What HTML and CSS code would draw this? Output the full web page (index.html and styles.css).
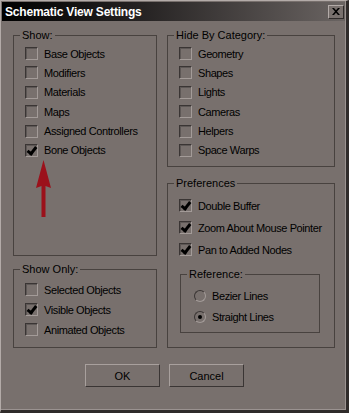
FILE: index.html
```html
<!DOCTYPE html>
<html lang="en">
<head>
  <meta charset="UTF-8" />
  <title>Schematic View Settings</title>
  <link rel="stylesheet" href="styles.css">
</head>
<body>
  <div class="window">
    <div class="titlebar">
      <span class="title">Schematic View Settings</span>
      <button class="close">
        <svg width="8" height="7" viewBox="0 0 8 7"><path d="M0 0h2l2 2.2L6 0h2L5 3.5 8 7H6L4 4.8 2 7H0l3-3.5z" fill="#000"/></svg>
      </button>
    </div>

    <div class="content">
      <div class="col col-left">
        <div class="group show">
          <span class="legend">Show:</span>
          <div class="list">
            <label class="row"><span class="cb"></span>Base Objects</label>
            <label class="row"><span class="cb"></span>Modifiers</label>
            <label class="row"><span class="cb"></span>Materials</label>
            <label class="row"><span class="cb"></span>Maps</label>
            <label class="row"><span class="cb"></span>Assigned Controllers</label>
            <label class="row"><span class="cb checked"></span>Bone Objects</label>
          </div>
          <svg class="arrow" width="16" height="57" viewBox="0 0 16 57">
            <polygon points="7.5,0 15,28 9.5,26 9.5,57 5.5,57 5.5,26 0,28" fill="#9b111b"/>
          </svg>
        </div>

        <div class="group show-only">
          <span class="legend">Show Only:</span>
          <div class="list">
            <label class="row"><span class="cb"></span>Selected Objects</label>
            <label class="row"><span class="cb checked"></span>Visible Objects</label>
            <label class="row"><span class="cb"></span>Animated Objects</label>
          </div>
        </div>
      </div>

      <div class="col col-right">
        <div class="group hide">
          <span class="legend">Hide By Category:</span>
          <div class="list">
            <label class="row"><span class="cb"></span>Geometry</label>
            <label class="row"><span class="cb"></span>Shapes</label>
            <label class="row"><span class="cb"></span>Lights</label>
            <label class="row"><span class="cb"></span>Cameras</label>
            <label class="row"><span class="cb"></span>Helpers</label>
            <label class="row"><span class="cb"></span>Space Warps</label>
          </div>
        </div>

        <div class="group prefs">
          <span class="legend">Preferences</span>
          <div class="list">
            <label class="row"><span class="cb checked"></span>Double Buffer</label>
            <label class="row"><span class="cb checked"></span>Zoom About Mouse Pointer</label>
            <label class="row"><span class="cb checked"></span>Pan to Added Nodes</label>
          </div>
          <div class="group reference">
            <span class="legend">Reference:</span>
            <div class="list">
              <label class="row"><span class="radio"></span>Bezier Lines</label>
              <label class="row"><span class="radio on"></span>Straight Lines</label>
            </div>
          </div>
        </div>
      </div>
    </div>

    <div class="buttons">
      <button class="btn">OK</button>
      <button class="btn">Cancel</button>
    </div>
  </div>
</body>
</html>
```

FILE: styles.css
```css
body {
  margin: 0;
  background: #78706d;
  font-family: 'Liberation Sans', Arial, sans-serif;
  font-size: 11px;
  color: #000;
}
.window {
  width: 349px;
  height: 413px;
  box-sizing: border-box;
  background: #78706d;
  border-top: 1px solid #b3aba8;
  border-left: 1px solid #b3aba8;
  border-right: 3px solid #2f2b2a;
  border-bottom: 3px solid #2f2b2a;
  box-shadow: inset -1px -1px 0 #9a9290;
}
.titlebar {
  margin: 1px 1px 0 1px;
  height: 19px;
  display: flex;
  align-items: center;
  justify-content: space-between;
  padding: 0 1px 0 3px;
  background: linear-gradient(to right, #000 0%, #252222 40%, #6a6462 100%);
}
.title {
  color: #fff;
  font-weight: bold;
  font-size: 12px;
  letter-spacing: -0.2px;
}
.close {
  width: 16px;
  height: 14px;
  padding: 0;
  margin: 0;
  display: flex;
  align-items: center;
  justify-content: center;
  background: #78706d;
  border: 1px solid;
  border-color: #b3aba8 #2f2b2a #2f2b2a #b3aba8;
}
.content {
  display: flex;
  gap: 10px;
  padding: 14px 0 0 12px;
}
.col {
  display: flex;
  flex-direction: column;
}
.col-left { width: 144px; gap: 13px; }
.col-right { width: 168px; gap: 16px; }
.group {
  position: relative;
  box-sizing: border-box;
  border: 1px solid #48423f;
}
.legend {
  position: absolute;
  top: -7px;
  left: 6px;
  padding: 0 2px;
  line-height: 13px;
  background: #78706d;
}
.list {
  display: flex;
  flex-direction: column;
}
.row {
  height: 13px;
  display: flex;
  align-items: center;
  gap: 6px;
  white-space: nowrap;
  letter-spacing: -0.4px;
}
.show { height: 221px; padding: 11px 0 0 11px; }
.show .list, .hide .list { gap: 6.4px; }
.arrow { display: block; margin: 3px 0 0 11px; }
.show-only { height: 79px; padding: 13px 0 0 11px; }
.show-only .list { gap: 7px; }
.hide { height: 132px; padding: 11px 0 0 11px; }
.prefs { height: 165px; padding: 15px 0 0 11px; }
.prefs > .list { gap: 9px; }
.reference {
  width: 140px;
  height: 59px;
  margin: 18px 0 0 1px;
  padding: 14px 0 0 13px;
}
.reference .list { gap: 8px; }
.cb {
  width: 13px;
  height: 13px;
  flex: none;
  box-sizing: border-box;
  border: 1px solid;
  border-color: #3a3534 #a39b98 #a39b98 #3a3534;
  box-shadow: inset 1px 1px 0 #5d5755;
  position: relative;
}
.cb.checked::after {
  content: "";
  position: absolute;
  left: 3px;
  top: 0px;
  width: 3px;
  height: 7px;
  border: solid #000;
  border-width: 0 3px 3px 0;
  transform: rotate(38deg);
}
.radio {
  width: 12px;
  height: 12px;
  flex: none;
  box-sizing: border-box;
  border-radius: 50%;
  border: 1px solid;
  border-color: #3a3534 #a39b98 #a39b98 #3a3534;
  position: relative;
}
.radio.on::after {
  content: "";
  position: absolute;
  left: 3px;
  top: 3px;
  width: 4px;
  height: 4px;
  border-radius: 50%;
  background: #000;
}
.buttons {
  display: flex;
  gap: 9px;
  padding: 16px 0 0 84px;
}
.btn {
  width: 75px;
  height: 23px;
  padding: 0;
  font-family: 'Liberation Sans', Arial, sans-serif;
  font-size: 11px;
  color: #000;
  background: #78706d;
  border: 1px solid;
  border-color: #a8a09d #3a3534 #3a3534 #a8a09d;
}
```
